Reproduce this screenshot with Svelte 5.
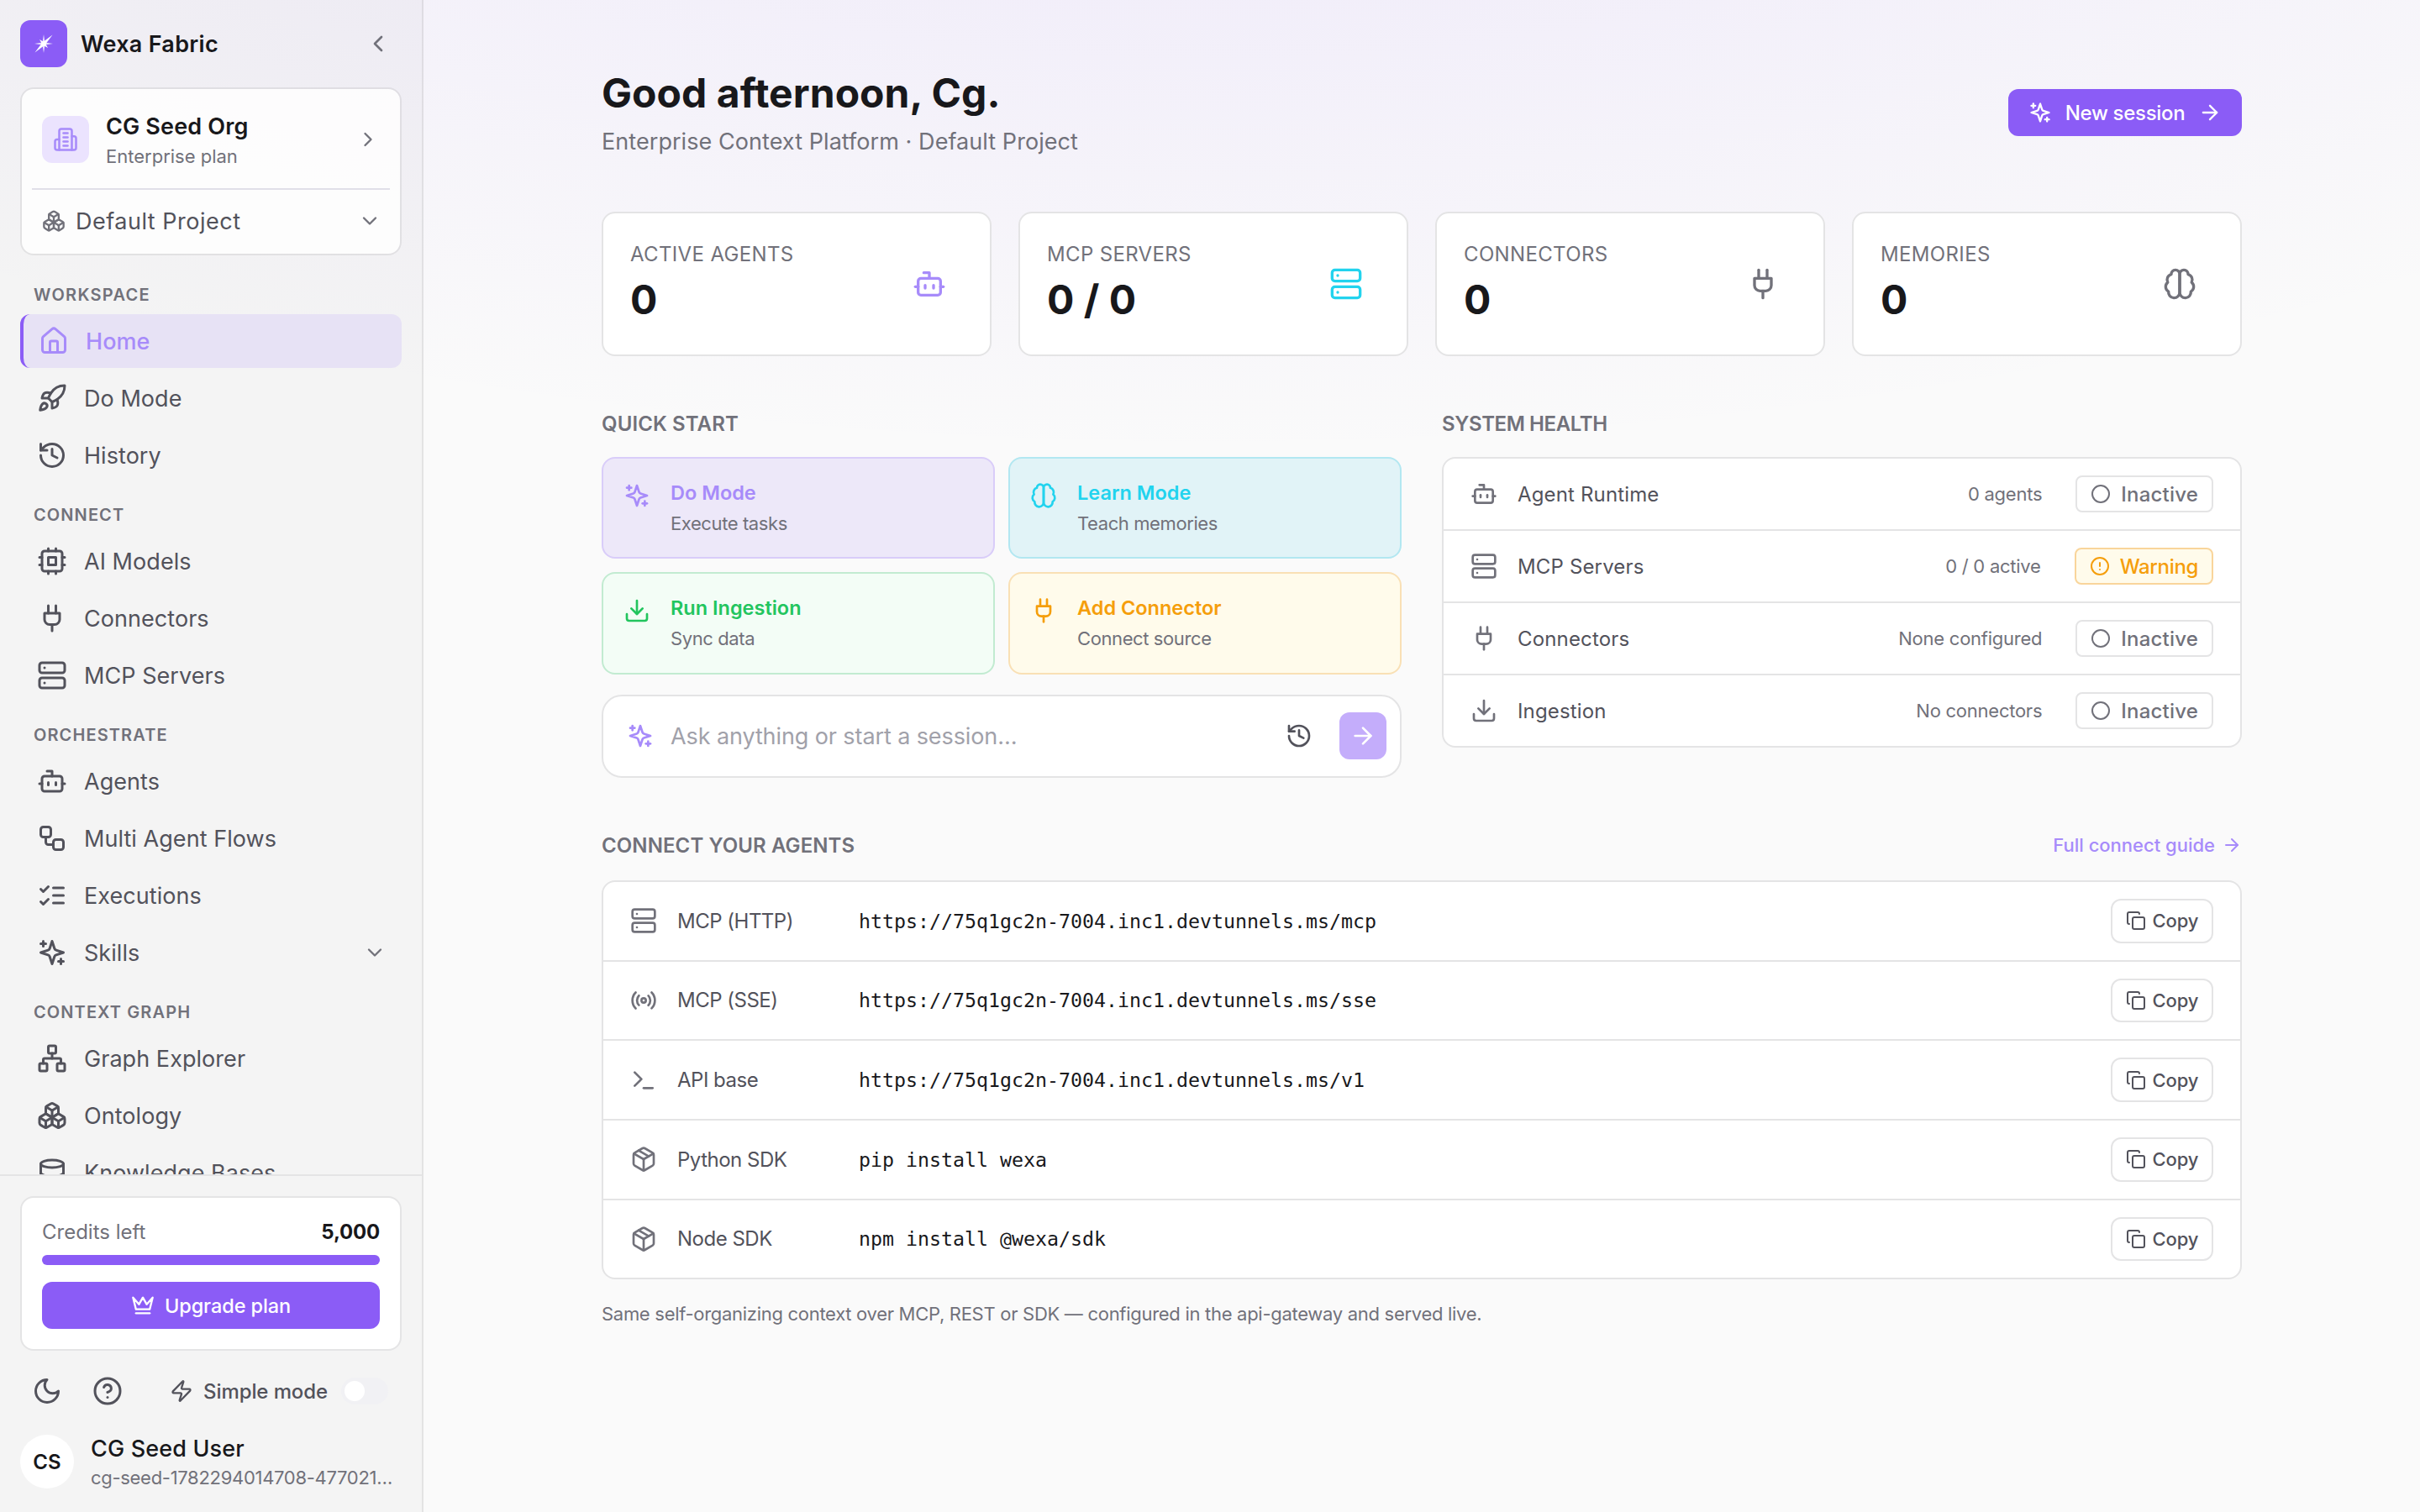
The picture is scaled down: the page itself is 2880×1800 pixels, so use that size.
<script>
  const icons = {
    home: '<path d="M15 21v-8a1 1 0 0 0-1-1h-4a1 1 0 0 0-1 1v8"/><path d="M3 10a2 2 0 0 1 .709-1.528l7-6a2 2 0 0 1 2.582 0l7 6A2 2 0 0 1 21 10v9a2 2 0 0 1-2 2H5a2 2 0 0 1-2-2z"/>',
    rocket: '<path d="M4.5 16.5c-1.5 1.26-2 5-2 5s3.74-.5 5-2c.71-.84.7-2.13-.09-2.91a2.18 2.18 0 0 0-2.91-.09z"/><path d="m12 15-3-3a22 22 0 0 1 2-3.95A12.88 12.88 0 0 1 22 2c0 2.72-.78 7.5-6 11a22.35 22.35 0 0 1-4 2z"/><path d="M9 12H4s.55-3.03 2-4c1.62-1.08 5 0 5 0"/><path d="M12 15v5s3.03-.55 4-2c1.08-1.62 0-5 0-5"/>',
    history: '<path d="M3 12a9 9 0 1 0 9-9 9.75 9.75 0 0 0-6.74 2.74L3 8"/><path d="M3 3v5h5"/><path d="M12 7v5l4 2"/>',
    chip: '<rect x="4" y="4" width="16" height="16" rx="2"/><rect x="9" y="9" width="6" height="6"/><path d="M15 2v2M15 20v2M2 15h2M2 9h2M20 15h2M20 9h2M9 2v2M9 20v2"/>',
    plug: '<path d="M12 22v-5"/><path d="M9 8V2"/><path d="M15 8V2"/><path d="M18 8v5a4 4 0 0 1-4 4h-4a4 4 0 0 1-4-4V8Z"/>',
    server: '<rect width="20" height="8" x="2" y="2" rx="2"/><rect width="20" height="8" x="2" y="14" rx="2"/><path d="M6 6h.01M6 18h.01"/>',
    bot: '<path d="M12 8V4H8"/><rect width="16" height="12" x="4" y="8" rx="2"/><path d="M2 14h2"/><path d="M20 14h2"/><path d="M15 13v2"/><path d="M9 13v2"/>',
    workflow: '<rect width="8" height="8" x="3" y="3" rx="2"/><path d="M7 11v4a2 2 0 0 0 2 2h4"/><rect width="8" height="8" x="13" y="13" rx="2"/>',
    checks: '<path d="m3 17 2 2 4-4"/><path d="m3 7 2 2 4-4"/><path d="M13 6h8"/><path d="M13 12h8"/><path d="M13 18h8"/>',
    sparkles: '<path d="m12 3-1.9 5.8a2 2 0 0 1-1.287 1.288L3 12l5.8 1.9a2 2 0 0 1 1.288 1.287L12 21l1.9-5.8a2 2 0 0 1 1.287-1.288L21 12l-5.8-1.9a2 2 0 0 1-1.288-1.287Z"/><path d="M5 3v4"/><path d="M19 17v4"/><path d="M3 5h4"/><path d="M17 19h4"/>',
    network: '<rect x="16" y="16" width="6" height="6" rx="1"/><rect x="2" y="16" width="6" height="6" rx="1"/><rect x="9" y="2" width="6" height="6" rx="1"/><path d="M5 16v-3a1 1 0 0 1 1-1h12a1 1 0 0 1 1 1v3"/><path d="M12 12V8"/>',
    boxes: '<path d="M2.97 12.92A2 2 0 0 0 2 14.63v3.24a2 2 0 0 0 .97 1.71l3 1.8a2 2 0 0 0 2.06 0L12 19v-5.5l-5-3-4.03 2.42Z"/><path d="m7 16.5-4.74-2.85"/><path d="m7 16.5 5-3"/><path d="M7 16.5v5.17"/><path d="M12 13.5V19l3.97 2.38a2 2 0 0 0 2.06 0l3-1.8a2 2 0 0 0 .97-1.71v-3.24a2 2 0 0 0-.97-1.71L17 10.5l-5 3Z"/><path d="m17 16.5-5-3"/><path d="m17 16.5 4.74-2.85"/><path d="M17 16.5v5.17"/><path d="M7.97 4.42A2 2 0 0 0 7 6.13v4.37l5 3 5-3V6.13a2 2 0 0 0-.97-1.71l-3-1.8a2 2 0 0 0-2.06 0l-3 1.8Z"/><path d="M12 8 7.26 5.15"/><path d="m12 8 4.74-2.85"/><path d="M12 13.5V8"/>',
    database: '<ellipse cx="12" cy="5" rx="9" ry="3"/><path d="M3 5v14a9 3 0 0 0 18 0V5"/><path d="M3 12a9 3 0 0 0 18 0"/>',
    building: '<path d="M6 22V4a2 2 0 0 1 2-2h8a2 2 0 0 1 2 2v18Z"/><path d="M6 12H4a2 2 0 0 0-2 2v6a2 2 0 0 0 2 2h2"/><path d="M18 9h2a2 2 0 0 1 2 2v9a2 2 0 0 1-2 2h-2"/><path d="M10 6h4"/><path d="M10 10h4"/><path d="M10 14h4"/><path d="M10 18h4"/>',
    left: '<path d="m15 18-6-6 6-6"/>',
    right: '<path d="m9 18 6-6-6-6"/>',
    down: '<path d="m6 9 6 6 6-6"/>',
    arrow: '<path d="M5 12h14"/><path d="m12 5 7 7-7 7"/>',
    crown: '<path d="m2 4 3 12h14l3-12-6 7-4-7-4 7-6-7z"/><path d="M5 20h14"/>',
    moon: '<path d="M12 3a6 6 0 0 0 9 9 9 9 0 1 1-9-9Z"/>',
    help: '<circle cx="12" cy="12" r="10"/><path d="M9.09 9a3 3 0 0 1 5.83 1c0 2-3 3-3 3"/><path d="M12 17h.01"/>',
    zap: '<path d="M4 14a1 1 0 0 1-.78-1.63l9.9-10.2a.5.5 0 0 1 .86.46l-1.92 6.02A1 1 0 0 0 13 10h7a1 1 0 0 1 .78 1.63l-9.9 10.2a.5.5 0 0 1-.86-.46l1.92-6.02A1 1 0 0 0 11 14z"/>',
    brain: '<path d="M12 5a3 3 0 1 0-5.997.125 4 4 0 0 0-2.526 5.77 4 4 0 0 0 .556 6.588A4 4 0 1 0 12 18Z"/><path d="M12 5a3 3 0 1 1 5.997.125 4 4 0 0 1 2.526 5.77 4 4 0 0 1-.556 6.588A4 4 0 1 1 12 18Z"/>',
    download: '<path d="M12 15V3"/><path d="M21 15v4a2 2 0 0 1-2 2H5a2 2 0 0 1-2-2v-4"/><path d="m7 10 5 5 5-5"/>',
    circle: '<circle cx="12" cy="12" r="10"/>',
    alert: '<circle cx="12" cy="12" r="10"/><path d="M12 8v4"/><path d="M12 16h.01"/>',
    radio: '<path d="M4.9 19.1C1 15.2 1 8.8 4.9 4.9"/><path d="M7.8 16.2c-2.3-2.3-2.3-6.1 0-8.5"/><circle cx="12" cy="12" r="2"/><path d="M16.2 7.8c2.3 2.3 2.3 6.1 0 8.5"/><path d="M19.1 4.9C23 8.8 23 15.1 19.1 19"/>',
    terminal: '<path d="m4 17 6-6-6-6"/><path d="M12 19h8"/>',
    box: '<path d="m7.5 4.27 9 5.15"/><path d="M21 8a2 2 0 0 0-1-1.73l-7-4a2 2 0 0 0-2 0l-7 4A2 2 0 0 0 3 8v8a2 2 0 0 0 1 1.73l7 4a2 2 0 0 0 2 0l7-4A2 2 0 0 0 21 16Z"/><path d="m3.3 7 8.7 5 8.7-5"/><path d="M12 22V12"/>',
    copy: '<rect width="14" height="14" x="8" y="8" rx="2"/><path d="M4 16c-1.1 0-2-.9-2-2V4c0-1.1.9-2 2-2h10c1.1 0 2 .9 2 2"/>'
  };

  const sections = [
    {
      title: 'Workspace',
      items: [
        { icon: 'home', label: 'Home', active: true },
        { icon: 'rocket', label: 'Do Mode' },
        { icon: 'history', label: 'History' }
      ]
    },
    {
      title: 'Connect',
      items: [
        { icon: 'chip', label: 'AI Models' },
        { icon: 'plug', label: 'Connectors' },
        { icon: 'server', label: 'MCP Servers' }
      ]
    },
    {
      title: 'Orchestrate',
      items: [
        { icon: 'bot', label: 'Agents' },
        { icon: 'workflow', label: 'Multi Agent Flows' },
        { icon: 'checks', label: 'Executions' },
        { icon: 'sparkles', label: 'Skills', expandable: true }
      ]
    },
    {
      title: 'Context Graph',
      items: [
        { icon: 'network', label: 'Graph Explorer' },
        { icon: 'boxes', label: 'Ontology' },
        { icon: 'database', label: 'Knowledge Bases' }
      ]
    }
  ];

  const stats = [
    { label: 'Active agents', value: '0', icon: 'bot', tone: 'violet' },
    { label: 'MCP servers', value: '0 / 0', icon: 'server', tone: 'cyan' },
    { label: 'Connectors', value: '0', icon: 'plug', tone: 'muted' },
    { label: 'Memories', value: '0', icon: 'brain', tone: 'muted' }
  ];

  const quick = [
    { title: 'Do Mode', text: 'Execute tasks', icon: 'sparkles', tone: 'violet' },
    { title: 'Learn Mode', text: 'Teach memories', icon: 'brain', tone: 'cyan' },
    { title: 'Run Ingestion', text: 'Sync data', icon: 'download', tone: 'green' },
    { title: 'Add Connector', text: 'Connect source', icon: 'plug', tone: 'amber' }
  ];

  const health = [
    { name: 'Agent Runtime', detail: '0 agents', icon: 'bot', status: 'Inactive' },
    { name: 'MCP Servers', detail: '0 / 0 active', icon: 'server', status: 'Warning' },
    { name: 'Connectors', detail: 'None configured', icon: 'plug', status: 'Inactive' },
    { name: 'Ingestion', detail: 'No connectors', icon: 'download', status: 'Inactive' }
  ];

  const host = 'https://75q1gc2n-7004.inc1.devtunnels.ms';
  const endpoints = [
    { name: 'MCP (HTTP)', value: `${host}/mcp`, icon: 'server' },
    { name: 'MCP (SSE)', value: `${host}/sse`, icon: 'radio' },
    { name: 'API base', value: `${host}/v1`, icon: 'terminal' },
    { name: 'Python SDK', value: 'pip install wexa', icon: 'box' },
    { name: 'Node SDK', value: 'npm install @wexa/sdk', icon: 'box' }
  ];

  let credits = $state(5000);
  let creditLimit = $state(5000);
  let creditPct = $derived(Math.min(100, (credits / creditLimit) * 100));
</script>

{#snippet icon(name, size)}
  <svg
    class="icon"
    width={size}
    height={size}
    viewBox="0 0 24 24"
    fill="none"
    stroke="currentColor"
    stroke-width="2"
    stroke-linecap="round"
    stroke-linejoin="round"
    aria-hidden="true"
  >
    {@html icons[name]}
  </svg>
{/snippet}

<div class="app">
  <aside class="sidebar">
    <div class="brand">
      <div class="logo">
        <svg width="24" height="24" viewBox="-12 -12 24 24" fill="#fff" aria-hidden="true">
          <path d="M0-11 1.5-1.5 11 0 1.5 1.5 0 11-1.5 1.5-11 0-1.5-1.5z" opacity="0.8" />
          <path d="M10.5-10.5 1.5 1.5-10.5 10.5-1.5-1.5z" />
          <path d="M-5-5 1.4-1.4 5 5-1.4 1.4z" />
          <circle r="2.8" />
        </svg>
      </div>
      <span class="brand-name">Wexa Fabric</span>
      <span class="collapse">{@render icon('left', 32)}</span>
    </div>

    <div class="org-card">
      <div class="org">
        <div class="org-icon">{@render icon('building', 30)}</div>
        <div class="org-text">
          <span class="org-name">CG Seed Org</span>
          <span class="org-plan">Enterprise plan</span>
        </div>
        {@render icon('right', 28)}
      </div>
      <div class="project">
        {@render icon('boxes', 28)}
        <span>Default Project</span>
        {@render icon('down', 28)}
      </div>
    </div>

    <nav>
      {#each sections as section}
        <h3>{section.title}</h3>
        <div class="nav-group">
          {#each section.items as item}
            <div class="nav-item" class:active={item.active}>
              {@render icon(item.icon, 36)}
              <span>{item.label}</span>
              {#if item.expandable}
                <span class="expand">{@render icon('down', 28)}</span>
              {/if}
            </div>
          {/each}
        </div>
      {/each}
    </nav>

    <div class="side-footer">
      <div class="credits">
        <div class="credits-row">
          <span>Credits left</span>
          <b>{credits.toLocaleString('en-US')}</b>
        </div>
        <div class="bar"><div class="bar-fill" style="width: {creditPct}%"></div></div>
        <button class="upgrade">{@render icon('crown', 28)}<span>Upgrade plan</span></button>
      </div>
      <div class="tools">
        {@render icon('moon', 36)}
        {@render icon('help', 36)}
        <div class="simple">
          {@render icon('zap', 28)}
          <span>Simple mode</span>
          <div class="toggle"></div>
        </div>
      </div>
      <div class="user">
        <div class="avatar">CS</div>
        <div class="user-text">
          <span class="user-name">CG Seed User</span>
          <span class="user-mail">cg-seed-1782294014708-477021…</span>
        </div>
      </div>
    </div>
  </aside>

  <main>
    <header>
      <div>
        <h1>Good afternoon, Cg.</h1>
        <p>Enterprise Context Platform · Default Project</p>
      </div>
      <button class="new-session">
        {@render icon('sparkles', 28)}<span>New session</span>{@render icon('arrow', 28)}
      </button>
    </header>

    <section class="stats">
      {#each stats as stat}
        <div class="stat">
          <div>
            <div class="stat-label">{stat.label}</div>
            <div class="stat-value">{stat.value}</div>
          </div>
          <div class="stat-icon {stat.tone}">{@render icon(stat.icon, 40)}</div>
        </div>
      {/each}
    </section>

    <div class="columns">
      <section>
        <h2>Quick start</h2>
        <div class="quick">
          {#each quick as card}
            <div class="quick-card {card.tone}">
              {@render icon(card.icon, 32)}
              <div>
                <div class="quick-title">{card.title}</div>
                <div class="quick-text">{card.text}</div>
              </div>
            </div>
          {/each}
        </div>
        <div class="ask">
          <span class="violet">{@render icon('sparkles', 32)}</span>
          <span class="placeholder">Ask anything or start a session…</span>
          {@render icon('history', 32)}
          <button class="send">{@render icon('arrow', 32)}</button>
        </div>
      </section>

      <section>
        <h2 class="tight">System health</h2>
        <div class="health">
          {#each health as row}
            <div class="health-row">
              {@render icon(row.icon, 32)}
              <span class="health-name">{row.name}</span>
              <span class="health-detail">{row.detail}</span>
              <span class="badge" class:warning={row.status === 'Warning'}>
                {@render icon(row.status === 'Warning' ? 'alert' : 'circle', 24)}
                <span>{row.status}</span>
              </span>
            </div>
          {/each}
        </div>
      </section>
    </div>

    <section>
      <div class="connect-head">
        <h2>Connect your agents</h2>
        <a href="#guide"><span>Full connect guide</span>{@render icon('arrow', 24)}</a>
      </div>
      <div class="endpoints">
        {#each endpoints as row}
          <div class="endpoint">
            {@render icon(row.icon, 32)}
            <span class="endpoint-name">{row.name}</span>
            <code>{row.value}</code>
            <button class="copy">{@render icon('copy', 24)}<span>Copy</span></button>
          </div>
        {/each}
      </div>
      <p class="note">Same self-organizing context over MCP, REST or SDK — configured in the api-gateway and served live.</p>
    </section>
  </main>
</div>

<style>
  :global(body) {
    background: #fafafa;
  }

  .app {
    display: flex;
    height: 1800px;
    overflow: hidden;
    font-family: Inter, 'Liberation Sans', sans-serif;
    color: #18181b;
    background: radial-gradient(ellipse 80% 50% at 50% -20%, rgba(139, 92, 246, 0.12), transparent) #fafafa;
  }

  .app * {
    box-sizing: border-box;
  }

  .icon {
    display: block;
    flex-shrink: 0;
  }

  button {
    font: inherit;
    border: 0;
    padding: 0;
    color: #fff;
    background: #8b5cf6;
  }

  .violet { color: #a78bfa; }
  .cyan { color: #22d3ee; }
  .green { color: #22c55e; }
  .amber { color: #f59e0b; }
  .muted { color: #71717a; }

  /* sidebar */
  .sidebar {
    display: flex;
    flex-direction: column;
    flex-shrink: 0;
    width: 504px;
    height: 1800px;
    border-right: 2px solid rgba(0, 0, 0, 0.065);
    background: rgba(0, 0, 0, 0.024);
  }

  .brand {
    display: flex;
    align-items: center;
    height: 56px;
    margin: 24px 36px 24px 24px;
  }

  .logo {
    display: flex;
    align-items: center;
    justify-content: center;
    width: 56px;
    height: 56px;
    border-radius: 12px;
    background: #8b5cf6;
  }

  .brand-name {
    margin-left: 16px;
    font-size: 27px;
    font-weight: 600;
    letter-spacing: 0.3px;
  }

  .collapse {
    margin-left: auto;
    color: #71717a;
  }

  .org-card {
    flex-shrink: 0;
    height: 200px;
    margin: 0 24px;
    padding: 0 12px;
    border: 2px solid rgba(0, 0, 0, 0.065);
    border-radius: 16px;
    background: rgba(255, 255, 255, 0.82);
    background-clip: padding-box;
  }

  .org {
    display: flex;
    align-items: center;
    height: 120px;
    padding: 2px 12px 0;
    border-bottom: 2px solid #e0dfe8;
    color: #71717a;
  }

  .org-icon {
    display: flex;
    align-items: center;
    justify-content: center;
    width: 56px;
    height: 56px;
    border-radius: 12px;
    color: #a78bfa;
    background: #ebe3fe;
  }

  .org-text {
    display: flex;
    flex: 1;
    flex-direction: column;
    margin-left: 20px;
    padding-top: 2px;
  }

  .org-name {
    font-size: 27px;
    font-weight: 600;
    line-height: 38px;
    letter-spacing: 0.15px;
    color: #18181b;
  }

  .org-plan {
    font-size: 22px;
    line-height: 32px;
  }

  .project {
    display: flex;
    align-items: center;
    height: 74px;
    padding: 0 10px 0 12px;
    color: #71717a;
  }

  .project span {
    flex: 1;
    margin-left: 12px;
    font-size: 27px;
    letter-spacing: 0.5px;
    color: #52525b;
  }

  nav {
    flex: 1;
    min-height: 0;
    padding: 0 24px;
    overflow: hidden;
  }

  nav h3 {
    height: 62px;
    margin: 0;
    padding: 0 0 0 16px;
    font-size: 20px;
    font-weight: 600;
    line-height: 79px;
    letter-spacing: 1.1px;
    text-transform: uppercase;
    color: #71717a;
  }

  nav h3:first-child {
    height: 70px;
    line-height: 95px;
    letter-spacing: 1.3px;
  }

  .nav-group {
    display: flex;
    flex-direction: column;
    gap: 4px;
  }

  .nav-item {
    display: flex;
    align-items: center;
    gap: 20px;
    height: 64px;
    padding: 0 18px 0 20px;
    font-size: 27px;
    letter-spacing: 0.05px;
    color: #52525b;
  }

  .nav-item.active {
    padding-left: 18px;
    border-left: 4px solid #8b5cf6;
    border-radius: 12px;
    font-weight: 500;
    color: #a78bfa;
    background: #e7e2f5;
  }

  .expand {
    margin-left: auto;
    color: #71717a;
  }

  .side-footer {
    flex-shrink: 0;
    height: 402px;
    padding: 24px;
    border-top: 2px solid #e4e4e5;
  }

  .credits {
    height: 184px;
    padding: 24px;
    border: 2px solid #e4e4e5;
    border-radius: 16px;
    background: #fff;
  }

  .credits-row {
    display: flex;
    justify-content: space-between;
    height: 44px;
    font-size: 24px;
    line-height: 33px;
    color: #71717a;
  }

  .credits-row b {
    font-weight: 700;
    letter-spacing: -0.2px;
    color: #18181b;
  }

  .bar {
    height: 12px;
    border-radius: 6px;
    background: #f4f4f5;
  }

  .bar-fill {
    height: 12px;
    border-radius: 6px;
    background: #8b5cf6;
  }

  .upgrade {
    display: flex;
    align-items: center;
    justify-content: center;
    gap: 12px;
    width: 100%;
    height: 56px;
    margin-top: 20px;
    border-radius: 12px;
    font-size: 23.5px;
    font-weight: 500;
    letter-spacing: -0.1px;
  }

  .tools {
    display: flex;
    align-items: center;
    gap: 36px;
    height: 64px;
    margin-top: 16px;
    padding: 0 16px 0 14px;
    color: #52525b;
  }

  .simple {
    display: flex;
    align-items: center;
    margin-left: auto;
    font-size: 24px;
    font-weight: 500;
    letter-spacing: -0.1px;
  }

  .simple span {
    margin: 0 16px 0 12px;
  }

  .toggle {
    width: 56px;
    height: 32px;
    border-radius: 16px;
    background: radial-gradient(circle at 16px 50%, #fff 11.5px, #f1f1f4 12.5px);
  }

  .user {
    display: flex;
    align-items: center;
    height: 64px;
    margin-top: 20px;
  }

  .avatar {
    display: flex;
    align-items: center;
    justify-content: center;
    flex-shrink: 0;
    width: 64px;
    height: 64px;
    border-radius: 50%;
    font-size: 24px;
    font-weight: 600;
    background: #fff;
  }

  .user-text {
    display: flex;
    flex-direction: column;
    margin-left: 20px;
    padding-top: 2px;
  }

  .user-name {
    font-size: 27px;
    font-weight: 500;
    line-height: 36px;
    letter-spacing: 0.15px;
  }

  .user-mail {
    font-size: 22px;
    line-height: 32px;
    letter-spacing: -0.3px;
    white-space: nowrap;
    color: #71717a;
  }

  /* page */
  main {
    flex: 1;
    padding: 80px 212px 0;
  }

  header {
    display: flex;
    align-items: center;
    justify-content: space-between;
    height: 108px;
    margin-bottom: 64px;
  }

  h1 {
    margin: 2px 0 0;
    font-size: 48px;
    font-weight: 700;
    line-height: 60px;
    letter-spacing: 0.05px;
  }

  header p {
    margin: 7px 0 0;
    font-size: 27px;
    line-height: 42px;
    letter-spacing: 0.06px;
    color: #71717a;
  }

  .new-session {
    display: flex;
    align-items: center;
    justify-content: space-between;
    width: 278px;
    height: 56px;
    padding: 0 24px;
    border-radius: 12px;
    font-size: 24px;
    font-weight: 500;
    letter-spacing: -0.3px;
  }

  .stats {
    display: grid;
    grid-template-columns: repeat(4, 1fr);
    gap: 32px;
  }

  .stat {
    display: flex;
    justify-content: space-between;
    height: 172px;
    padding: 32px;
    border: 2px solid #e4e4e5;
    border-radius: 16px;
    background: #fff;
  }

  .stat-label {
    font-size: 24px;
    line-height: 33px;
    letter-spacing: 0.35px;
    text-transform: uppercase;
    color: #71717a;
  }

  .stat-value {
    margin-top: 8px;
    font-size: 48px;
    font-weight: 700;
    line-height: 60px;
  }

  .stat-icon {
    display: flex;
    align-items: center;
    justify-content: center;
    width: 80px;
  }

  h2 {
    margin: 0;
    font-size: 24px;
    font-weight: 600;
    line-height: 33px;
    letter-spacing: 0.1px;
    text-transform: uppercase;
    color: #71717a;
  }

  h2.tight {
    letter-spacing: -0.4px;
  }

  .columns {
    display: grid;
    grid-template-columns: 1fr 1fr;
    gap: 48px;
    margin-top: 64px;
  }

  .columns h2 {
    margin-bottom: 23px;
  }

  .quick {
    display: grid;
    grid-template-columns: 1fr 1fr;
    gap: 16px;
  }

  .quick-card {
    display: flex;
    gap: 24px;
    height: 121.33px;
    padding: 26px 24px;
    border: 2px solid;
    border-radius: 16px;
  }

  .quick-card :global(.icon) {
    margin-top: 2px;
  }

  .quick-card.violet { border-color: #d9cdf9; background: #ede8f9; }
  .quick-card.cyan { border-color: #b2e7f1; background: #e1f3f7; }
  .quick-card.green { border-color: #c2ebd1; background: #f3fdf6; }
  .quick-card.amber { border-color: #f9e0b5; background: #fffbeb; }

  .quick-title {
    font-size: 23.5px;
    font-weight: 600;
    line-height: 30px;
  }

  .quick-text {
    margin-top: 6px;
    font-size: 22px;
    line-height: 30px;
    letter-spacing: -0.4px;
    color: #71717a;
  }

  .ask {
    display: flex;
    align-items: center;
    height: 99.34px;
    margin-top: 24px;
    padding: 0 16px 0 28px;
    border: 2px solid #e4e4e5;
    border-radius: 24px;
    color: #52525b;
    background: #fff;
  }

  .placeholder {
    flex: 1;
    margin-left: 20px;
    font-size: 27px;
    letter-spacing: -0.1px;
    color: #a1a1aa;
  }

  .send {
    display: flex;
    align-items: center;
    justify-content: center;
    width: 56px;
    height: 56px;
    margin-left: 32px;
    border-radius: 12px;
    background: #c4adfb;
  }

  .health,
  .endpoints {
    border: 2px solid #e4e4e5;
    border-radius: 16px;
    background: #fff;
  }

  .health-row {
    display: flex;
    align-items: center;
    height: 86px;
    padding: 0 32px;
    border-bottom: 2px solid #e4e4e5;
    color: #71717a;
  }

  .health-row:last-child {
    height: 84px;
    border-bottom: 0;
  }

  .health-name {
    flex: 1;
    margin-left: 24px;
    font-size: 24px;
    letter-spacing: 0.15px;
    color: #52525b;
  }

  .health-detail {
    margin-right: 40px;
    font-size: 22px;
    letter-spacing: -0.25px;
  }

  .badge {
    display: flex;
    align-items: center;
    gap: 12px;
    height: 44px;
    padding: 0 16px;
    border: 2px solid #e4e4e5;
    border-radius: 8px;
    font-size: 24px;
    font-weight: 500;
    letter-spacing: 0.2px;
  }

  .badge.warning {
    border-color: #f9d59b;
    letter-spacing: -0.35px;
    color: #f59e0b;
    background: #fffbeb;
  }

  .connect-head {
    display: flex;
    align-items: center;
    justify-content: space-between;
    margin: 64px 0 25px;
  }

  .connect-head a {
    display: flex;
    align-items: center;
    gap: 8px;
    font-size: 22px;
    font-weight: 500;
    text-decoration: none;
    color: #a78bfa;
  }

  .endpoint {
    display: flex;
    align-items: center;
    height: 94.67px;
    padding: 0 32px;
    border-bottom: 2px solid #e4e4e5;
    color: #71717a;
  }

  .endpoint:last-child {
    height: 92.67px;
    border-bottom: 0;
  }

  .endpoint-name {
    width: 216px;
    margin-left: 24px;
    font-size: 24px;
    letter-spacing: -0.5px;
    color: #52525b;
  }

  code {
    flex: 1;
    font-family: 'DejaVu Sans Mono', 'Liberation Mono', monospace;
    font-size: 23.25px;
    color: #18181b;
  }

  .copy {
    display: flex;
    align-items: center;
    justify-content: center;
    gap: 8px;
    width: 122px;
    height: 52.67px;
    border: 2px solid #e4e4e5;
    border-radius: 12px;
    font-size: 22px;
    font-weight: 500;
    letter-spacing: -0.1px;
    color: #52525b;
    background: #fff;
  }

  .note {
    margin: 24px 0 0;
    font-size: 22px;
    line-height: 34px;
    letter-spacing: -0.29px;
    color: #71717a;
  }
</style>
